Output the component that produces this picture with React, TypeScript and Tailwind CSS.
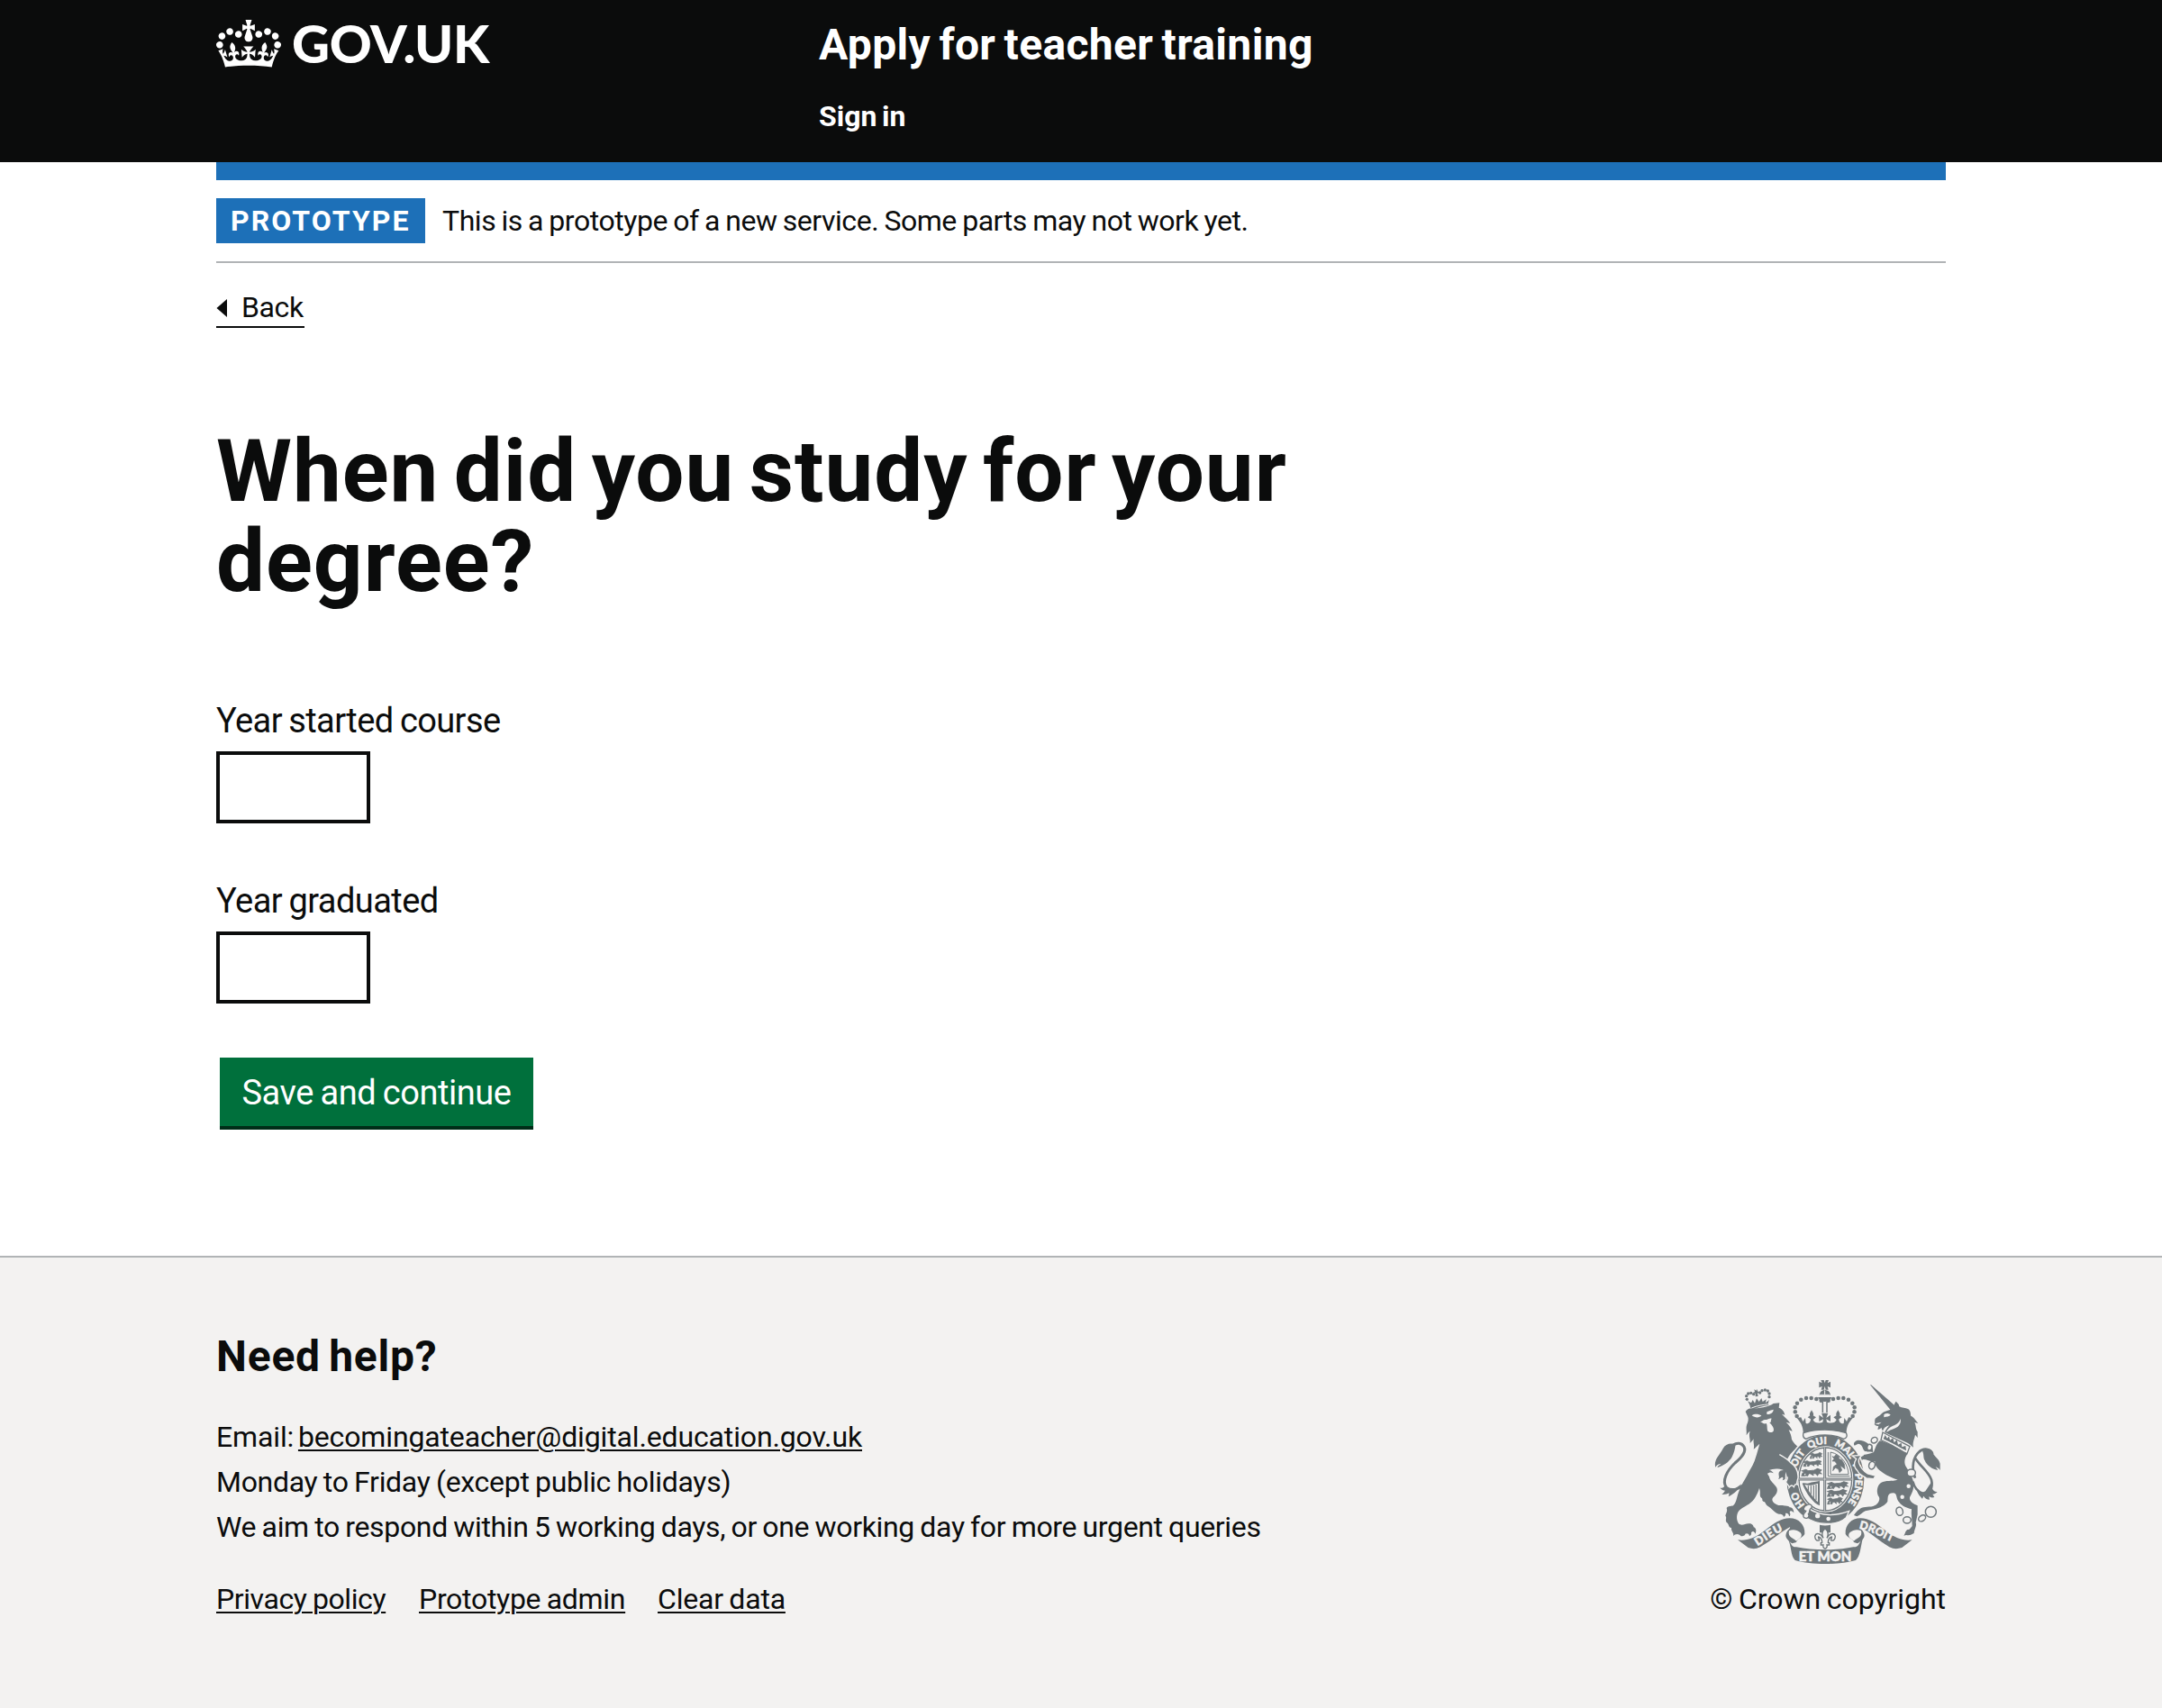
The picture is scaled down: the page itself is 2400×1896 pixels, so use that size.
import React from "react";

const CROWN_PATH =
  "M25 30.2c3.5 1.5 7.7-.2 9.1-3.7 1.5-3.6-.2-7.8-3.9-9.2-3.6-1.4-7.6.3-9.1 3.9-1.4 3.5.3 7.5 3.9 9zM9 39.5c3.6 1.5 7.8-.2 9.2-3.7 1.5-3.6-.2-7.8-3.9-9.1-3.6-1.5-7.6.2-9.1 3.8-1.4 3.5.3 7.5 3.8 9zM4.4 57.2c3.5 1.5 7.7-.2 9.1-3.8 1.5-3.6-.2-7.7-3.9-9.1-3.5-1.5-7.6.3-9.1 3.8-1.4 3.5.3 7.6 3.9 9.1zm38.3-21.4c3.5 1.5 7.7-.2 9.1-3.8 1.5-3.6-.2-7.7-3.9-9.1-3.6-1.5-7.6.3-9.1 3.8-1.3 3.6.4 7.7 3.9 9.1zm64.4-5.6c-3.6 1.5-7.8-.2-9.1-3.7-1.5-3.6.2-7.8 3.8-9.2 3.6-1.4 7.7.3 9.2 3.9 1.3 3.5-.4 7.5-3.9 9zm15.9 9.3c-3.6 1.5-7.7-.2-9.1-3.7-1.5-3.6.2-7.8 3.7-9.1 3.6-1.5 7.7.2 9.2 3.8 1.5 3.5-.3 7.5-3.8 9zm4.7 17.7c-3.6 1.5-7.8-.2-9.2-3.8-1.5-3.6.2-7.7 3.9-9.1 3.6-1.5 7.7.3 9.2 3.8 1.3 3.5-.4 7.6-3.9 9.1zM89.3 35.8c-3.6 1.5-7.8-.2-9.2-3.8-1.4-3.6.2-7.7 3.9-9.1 3.6-1.5 7.7.3 9.2 3.8 1.4 3.6-.3 7.7-3.9 9.1zM69.7 17.7l8.9 4.7V9.3l-8.9 2.8c-.2-.3-.5-.6-.9-.9L72.4 0H59.6l3.5 11.2c-.3.3-.6.5-.9.9l-8.8-2.8v13.1l8.8-4.7c.3.3.6.7.9.9l-5 15.4v.1c-.2.8-.4 1.6-.4 2.4 0 4.1 3.1 7.5 7 8.1h.2c.3 0 .7.1 1 .1.4 0 .7 0 1-.1h.2c4-.6 7.1-4.1 7.1-8.1 0-.8-.1-1.7-.4-2.4V34l-5.1-15.4c.4-.2.7-.6 1-.9zM66 92.8c16.9 0 32.8 1.1 47.1 3.2 4-16.9 8.9-26.7 14-33.5l-9.6-3.4c1 4.9 1.1 7.2 0 10.2-1.5-1.4-3-4.3-4.2-8.7L108.6 76c2.8-2 5-3.2 7.5-3.3-4.4 9.4-10 11.9-13.6 11.2-4.3-.8-6.3-4.6-5.6-7.9 1-4.7 5.7-5.9 8-.5 4.3-8.7-3-11.4-7.6-8.8 7.1-7.2 7.9-13.5 2.1-21.1-8 6.1-8.1 12.3-4.5 20.8-4.7-5.4-12.1-2.5-9.5 6.2 3.4-5.2 7.9-2 7.2 3.1-.6 4.3-6.4 7.8-13.5 7.2-10.3-.9-10.9-8-11.2-13.8 2.5-.5 7.1 1.8 11 7.3L80.2 60c-4.1 4.4-8 5.3-12.3 5.4 1.4-4.4 8-11.6 8-11.6H55.5s6.4 7.2 7.9 11.6c-4.2-.1-8-1-12.3-5.4l1.4 16.4c3.9-5.5 8.5-7.7 10.9-7.3-.3 5.8-.9 12.8-11.1 13.8-7.2.6-12.9-2.9-13.5-7.2-.7-5 3.8-8.3 7.1-3.1 2.7-8.7-4.6-11.6-9.4-6.2 3.7-8.5 3.6-14.7-4.6-20.8-5.8 7.6-5 13.9 2.2 21.1-4.7-2.6-11.9.1-7.7 8.8 2.3-5.5 7.1-4.2 8.1.5.7 3.3-1.3 7.1-5.7 7.9-3.5.7-9-1.8-13.5-11.2 2.5.1 4.7 1.3 7.5 3.3l-4.7-15.4c-1.2 4.4-2.7 7.2-4.3 8.7-1.1-3-.9-5.3 0-10.2l-9.5 3.4c5 6.9 9.9 16.7 14 33.5 14.8-2.1 30.8-3.2 47.7-3.2z";

const LEFT_PEARLS: [number, number][] = [
  [425, 134], [409, 129], [392, 126], [375, 126], [358, 131], [345, 143], [338, 157], [338.5, 172], [344, 186],
];

const LION_CROWN_PEARLS: [number, number][] = [
  [178, 130], [176, 119], [182, 111], [191, 109], [200, 113], [221, 108], [228, 101], [238, 99], [247, 102], [252, 111], [252, 122],
];

const BODY = "#6f777b";
const PAPER = "#f3f2f1";

function Lion() {
  return (
    <g>
      {/* tail */}
      <path
        d="M178 402C158 430 128 438 110 424C92 404 112 366 138 342C164 320 176 304 168 288C160 274 144 274 132 282"
        fill="none"
        stroke={BODY}
        strokeWidth="9"
      />
      <path d="M140 280C122 274 106 279 98 294C90 310 78 322 74 334C70 344 72 352 73 357C76 348 84 346 92 344C84 350 78 354 80 357C98 352 118 340 128 322C135 308 138 296 140 280Z" fill={BODY} />
      <path d="M106 416C98 426 94 426 88 425C94 431 99 433 105 434C100 441 98 444 94 447C106 448 112 445 118 442C118 446 118 450 116 454C134 446 152 430 160 412L140 426C126 432 112 426 106 416Z" fill={BODY} />
      {/* body and mane */}
      <path
        d="M173 171C178 164 184 160 190 161C220 160 248 156 266 144L286 142L284 158C296 162 302 172 304 182L294 179C304 190 316 200 322 210L308 206C318 216 326 226 329 236L317 232C323 244 326 254 327 264C334 276 340 284 352 290C334 296 320 312 312 330C330 346 346 362 350 382C352 398 340 402 346 412C340 408 336 410 334 418C328 412 324 414 318 420C318 412 312 412 310 406C310 400 318 396 312 388C308 396 302 398 296 400C300 394 298 388 294 390C290 392 286 396 282 396C288 388 282 384 284 374C286 368 292 366 300 366C278 358 262 362 252 366C260 368 264 372 266 376C258 372 250 374 246 378L252 388C254 400 262 406 274 420C284 432 276 446 268 454C258 462 262 472 272 478C282 486 290 482 300 484C310 486 316 484 320 490C328 488 334 498 334 508C328 500 322 500 320 506C324 512 322 518 318 520C318 512 312 508 306 510C308 516 304 520 300 522C300 514 292 512 284 512C268 508 260 492 248 486C238 480 242 472 232 470C226 466 232 462 226 458C218 454 224 442 220 430C216 420 220 412 222 402C222 424 214 444 202 462C190 480 168 486 152 500C142 512 142 530 150 544C162 554 172 542 186 544C196 544 200 552 200 556C208 558 210 568 206 578C202 568 196 568 192 574C194 580 190 584 186 586C186 578 178 574 172 578C172 584 164 586 158 586C150 576 138 578 132 586C136 574 124 570 126 558C114 556 120 546 110 540C104 532 112 524 106 518C108 508 114 504 110 492C116 484 124 488 132 484C144 472 144 452 152 434C160 414 170 398 178 384C188 362 200 348 206 326C212 308 216 292 220 278C210 286 206 292 200 296C204 284 198 276 200 262C196 268 192 272 188 276C190 262 182 252 188 236C182 240 180 244 176 250C178 234 172 224 180 208C184 196 182 188 178 182Z"
        fill={BODY}
      />
      {/* face */}
      <path d="M194 184C204 177 216 179 226 184C220 192 206 193 194 184ZM244 172C252 168 258 166 266 164C266 175 254 181 244 180Z" fill={PAPER} />
      <path d="M222 204C230 205 232 196 240 198C246 200 250 192 260 194C256 200 260 208 252 208C260 214 270 226 266 236C262 242 250 242 246 234C244 224 246 216 242 210C236 214 228 208 222 204Z" fill={PAPER} />
      {/* crown */}
      <path d="M189 157C188 149 184 142 180 136L192 142L197 132L204 143L210 127L218 138L226 126L230 138L242 130L240 142L252 132C249 138 248 144 250 150C230 152 210 158 193 166Z" fill={BODY} />
      <path d="M193 159C212 151 232 148 250 146" stroke={PAPER} strokeWidth="3" fill="none" />
      {LION_CROWN_PEARLS.map(([x, y]) => (
        <circle key={x + "-" + y} cx={x} cy={y} r="5" fill={BODY} />
      ))}
      <path d="M202 97L209 101L210 95L215 105L221 105L213 110L215 120L206 121L206 111L198 108L204 105Z" fill={BODY} />
    </g>
  );
}

function Unicorn() {
  return (
    <g>
      {/* horn, head and mane */}
      <path d="M588 82C592 80 595 84 598 88L672 152L656 166Z" fill={BODY} />
      <path
        d="M656 164L668 152C668 146 670 142 674 137C678 142 684 144 685 154C694 160 706 158 714 162C724 168 722 178 724 186C732 188 738 198 748 210L736 207C742 218 738 226 746 238L746 258L738 248C736 262 728 274 732 290C724 284 718 276 706 272L636 240C640 232 646 224 652 217C642 220 634 224 630 236L625 224C622 228 618 230 613 230L616 218C612 220 606 218 602 213C606 209 602 203 604 198C606 190 616 188 624 180C632 170 644 168 656 164Z"
        fill={BODY}
      />
      <path d="M634 181C640 176 650 176 656 182C652 188 642 187 634 190ZM689 194C692 210 684 220 672 226C660 232 650 234 642 240C646 228 654 222 664 218C676 214 686 206 689 194ZM604 211L626 206L616 214Z" fill={PAPER} />
      {/* coronet collar */}
      <path d="M630 240L720 287L711 311C688 300 652 276 624 266Z" fill={PAPER} stroke={BODY} strokeWidth="4" />
      <path d="M632 262L638 249L645 260L651 253L654 266L664 259L668 274L677 265L681 281L692 275L694 289L706 285L708 301C684 289 660 275 632 262Z" fill={BODY} />
      {/* tail */}
      <path
        d="M738 392C724 356 732 322 750 306C766 290 790 294 796 312M736 322C752 352 784 370 792 398C798 424 788 448 764 444C746 438 734 420 730 404"
        fill="none"
        stroke={BODY}
        strokeWidth="8"
      />
      <path d="M762 302C774 290 794 294 798 310C802 322 816 326 821 344L821 366C818 360 812 358 806 354L814 366C796 364 776 350 770 334C764 322 768 314 762 302Z" fill={BODY} />
      <path d="M744 434C748 448 756 454 762 461L766 452C770 460 778 464 786 464L784 454C790 458 796 458 802 456L796 446C804 446 808 442 812 438C796 440 790 420 792 406L772 436C762 442 752 440 744 434Z" fill={BODY} />
      {/* body and legs */}
      <path
        d="M620 268C650 274 682 296 712 312C704 324 700 338 706 352C720 374 728 388 732 404C736 424 728 442 720 456C718 470 732 478 746 484L746 514L740 540C744 552 736 560 734 576C726 580 722 584 708 582L700 584C706 576 704 570 712 564C720 566 722 558 728 552C728 532 724 512 726 496C710 492 692 484 686 474C672 460 680 444 666 442C644 442 648 456 646 470C640 482 620 492 602 496L572 502C560 508 556 516 544 520L534 516C540 508 544 502 550 498C562 486 580 490 598 486C612 482 622 468 618 456C606 440 612 416 624 408C640 398 660 404 680 398C664 392 644 384 630 374C614 364 602 350 604 336C592 340 580 330 564 330C556 336 554 344 556 354L554 318C570 314 588 312 600 306C606 292 608 280 620 268Z"
        fill={BODY}
      />
      <path d="M598 306C584 304 570 308 566 298C562 288 560 280 548 278L536 284C530 276 538 268 548 266C562 266 572 270 582 278L596 290Z" fill={BODY} />
      {/* chain */}
      <g fill={PAPER} stroke={BODY} strokeWidth="4.500">
        <ellipse cx="602" cy="266" rx="11" ry="9" transform="rotate(-35 602 266)" />
        <ellipse cx="586" cy="290" rx="8" ry="10" transform="rotate(15 586 290)" />
        <ellipse cx="594" cy="350" rx="10" ry="13" transform="rotate(15 594 350)" />
        <ellipse cx="725" cy="375" rx="14" ry="12" />
        <circle cx="716" cy="419" r="9" />
        <circle cx="695" cy="455" r="9" />
        <ellipse cx="686" cy="503" rx="11" ry="14" transform="rotate(-15 686 503)" />
        <ellipse cx="711" cy="532" rx="13" ry="11" />
        <ellipse cx="761" cy="526" rx="13" ry="9" transform="rotate(-35 761 526)" />
        <circle cx="790" cy="505" r="18" />
      </g>
    </g>
  );
}

function RoyalCrown() {
  return (
    <g>
      <path d="M424 66H450L446 76L456 71V91L446 87L449 98H425L428 87L418 91V71L428 76Z" fill={BODY} />
      <path d="M434 66L440 66L437 76ZM434 98L440 98L437 86Z" fill={PAPER} />
      <path d="M419 117C420 105 428 99 437 99C447 99 455 105 456 117Z" fill={BODY} />
      <path d="M420 115H455M437 100V114" stroke={PAPER} strokeWidth="3" />
      <path d="M414 123H460C456 133 446 138 437 138C428 138 418 133 414 123Z" fill={BODY} />
      <path d="M430 138V174M444 138V174" stroke={BODY} strokeWidth="4.500" />
      {LEFT_PEARLS.map(([x, y]) => (
        <g key={x} fill={BODY}>
          <circle cx={x} cy={y} r="6.8" />
          <circle cx={874 - x} cy={y} r="6.8" />
        </g>
      ))}
      <path
        d="M365 246C366 220 356 206 344 192L358 190L364 204L372 192L374 210C382 214 390 206 390 196L380 190L388 184C384 178 390 172 393 166C396 172 402 178 398 184L408 190L398 198C402 208 414 212 430 206L432 196L418 204V182L432 192L426 176H448L442 192L456 182V204L442 196L444 206C460 212 472 208 476 198L466 190L476 184C472 178 478 172 481 166C484 172 490 178 486 184L494 190L484 196C484 206 492 214 500 210L502 192L510 204L516 190L530 192C518 206 508 220 509 246C500 236 374 236 365 246Z"
        fill={BODY}
      />
      <path d="M366 242C362 256 368 260 374 262C410 244 466 244 500 262C508 260 514 254 508 242C468 228 406 228 366 242Z" fill={PAPER} stroke={BODY} strokeWidth="4" />
      <path d="M379 222C416 212 458 212 495 222" stroke={BODY} strokeWidth="8" fill="none" />
    </g>
  );
}

function Garter() {
  const lion = "M0 6L8 2L14 6L26 4L32 0L40 4L36 9L40 14L34 13L32 19L28 13L22 14L24 19L18 14L14 14L12 20L8 19L10 12L4 14L6 20L0 20L2 12L6 9Z";
  return (
    <g>
      <ellipse cx="439" cy="396" rx="134" ry="153" fill={PAPER} />
      <ellipse cx="439" cy="396" rx="129" ry="148" fill={BODY} />
      <ellipse cx="439" cy="396" rx="93" ry="110" fill={PAPER} />
      <ellipse cx="439" cy="396" rx="88" ry="105" fill="none" stroke={BODY} strokeWidth="4" />
      <path id="garter-motto" d="M372 483A100 117 0 0 1 339 396A100 117 0 0 1 439 279A100 117 0 0 1 539 396A100 117 0 0 1 506 483" fill="none" />
      <g fill={PAPER} stroke={PAPER} strokeWidth="1.5" fontFamily="Lato, sans-serif" fontWeight="900" fontSize="33">
        <text><textPath href="#garter-motto" startOffset="2">HO</textPath></text>
        <text><textPath href="#garter-motto" startOffset="116">SOIT</textPath></text>
        <text><textPath href="#garter-motto" startOffset="209">QUI</textPath></text>
        <text><textPath href="#garter-motto" startOffset="295">MAL</textPath></text>
        <text><textPath href="#garter-motto" startOffset="379">Y</textPath></text>
        <text><textPath href="#garter-motto" startOffset="417">PENSE</textPath></text>
      </g>
      {/* quartered arms */}
      <path d="M437 290V502M350 396H528" stroke={BODY} strokeWidth="9" />
      <path d="M437 290V502M350 396H528" stroke={PAPER} strokeWidth="2" />
      <g fill={BODY} stroke={BODY} strokeWidth="2">
        <path d={lion} transform="translate(388 307)" />
        <path d={lion} transform="translate(366 333) scale(1.5 1)" />
        <path d={lion} transform="translate(360 361) scale(1.65 1.2)" />
        <path d={lion} transform="translate(446 404) scale(1.7 1.15)" />
        <path d={lion} transform="translate(446 430) scale(1.6 1.15)" />
        <path d={lion} transform="translate(446 456) scale(1.25 1.15)" />
        <path d="M462 320L468 322L474 314L484 320L484 328L494 332L502 346L504 362L496 356L488 350L494 366L486 374L482 362L472 358L464 368L466 354L478 346L470 336L462 336L468 328Z" />
      </g>
      <path d="M448 306V386H520M456 306V380H516C516 350 492 312 456 306" stroke={BODY} strokeWidth="3" fill="none" />
      <path d="M362 410C370 406 376 414 388 408C400 404 416 406 420 400V484C400 476 376 446 362 410ZM370 414C386 440 400 460 414 472V410C400 416 382 418 370 414Z" fillRule="evenodd" fill={BODY} />
      <path d="M382 418V434M391 418V446M400 416V458M408 414V466" stroke={BODY} strokeWidth="3.500" />
      {/* strap and buckle */}
      <path d="M378 490C420 520 470 520 518 502L508 524C478 552 412 552 366 518Z" fill={BODY} stroke={PAPER} strokeWidth="4" />
      <circle cx="413" cy="518" r="8" fill={PAPER} />
      <circle cx="449" cy="528" r="7" fill={PAPER} />
      <path d="M378 482C388 476 398 484 392 492C382 496 390 506 382 512C388 520 380 530 368 524C360 516 370 510 374 502C362 500 366 486 378 482Z" fill={PAPER} stroke={BODY} strokeWidth="4" />
    </g>
  );
}

function Paws() {
  return (
    <g fill={BODY} stroke={PAPER} strokeWidth="4">
      {/* lion's forearm over the garter */}
      <path d="M286 314C304 324 314 330 322 340C340 352 348 368 348 386C350 398 340 402 346 414C340 410 338 414 334 422C328 414 324 416 318 424C318 414 310 414 308 406C308 400 316 396 312 388" />
      {/* unicorn's lower foreleg over the garter */}
      <path d="M566 316C556 318 552 326 550 332C548 344 556 354 562 362C568 370 574 374 580 378L606 384L600 395L576 393C562 382 550 382 546 368C532 356 534 340 542 328L528 318Z" />
    </g>
  );
}

function Scroll() {
  return (
    <g>
      <path d="M147 598C174 602 202 594 236 568C268 542 292 526 320 526C350 526 372 548 370 578C366 590 346 592 342 606L328 610C316 600 304 592 308 578C312 564 326 558 320 556C290 572 258 602 222 622C206 630 194 628 182 624Z" fill={BODY} />
      <path d="M318 568C330 562 344 564 356 574C366 586 352 596 342 602C334 592 312 590 318 568Z" fill={PAPER} />
      <path d="M728 598C700 602 674 594 640 568C608 542 584 526 556 526C526 526 504 548 506 578C510 590 530 592 534 606L546 610C560 600 572 592 568 578C564 564 550 558 556 556C586 572 618 602 652 622C668 630 680 628 694 624Z" fill={BODY} />
      <path d="M558 568C546 562 532 564 520 574C510 586 524 596 534 602C542 592 564 590 558 568Z" fill={PAPER} />
      <path d="M312 590C326 606 322 622 342 622C400 634 476 634 532 622C554 622 550 606 564 590C556 622 556 650 540 666C484 682 392 682 338 666C322 650 328 618 312 590Z" fill={BODY} />
      <path id="scroll-left" d="M213 618C246 600 280 568 330 557" fill="none" />
      <path id="scroll-right" d="M550 560C590 566 630 594 690 617" fill="none" />
      <g fill={PAPER} stroke={PAPER} strokeWidth="1.5" fontFamily="Lato, sans-serif" fontWeight="900">
        <text fontSize="38" letterSpacing="3"><textPath href="#scroll-left">DIEU</textPath></text>
        <text fontSize="37" letterSpacing="1"><textPath href="#scroll-right">DROIT</textPath></text>
        <text x="350" y="668" fontSize="46" textLength="176" lengthAdjust="spacingAndGlyphs">ET MON</text>
      </g>
      {/* fleur-de-lis */}
      <path d="M420 548C432 551 444 551 456 548V574H420Z" fill={BODY} />
      <path
        d="M438 560C428 568 426 580 432 592C424 576 408 572 404 586C404 596 410 602 418 600C420 594 414 592 416 588C424 590 428 600 428 608H424V615H432C430 622 434 627 438 627C442 627 446 622 444 615H452V608H448C448 600 452 590 460 588C462 592 456 594 458 600C466 602 472 596 472 586C468 572 452 576 444 592C450 580 448 568 438 560Z"
        fill={PAPER}
        stroke={BODY}
        strokeWidth="4"
      />
    </g>
  );
}

function RoyalArms() {
  return (
    <svg viewBox="60 60 780 630" className="block h-[210px] w-[260px]" aria-hidden="true">
      <Lion />
      <Unicorn />
      <Garter />
      <RoyalCrown />
      <Paws />
      <Scroll />
    </svg>
  );
}

function Header() {
  return (
    <header className="h-[180px] bg-[#0b0c0c] text-white">
      <div className="mx-[240px] flex">
        <a className="flex h-[95px] w-[669px] items-center">
          <svg viewBox="0 0 132 97" className="mt-px h-[53px] w-[72px] fill-current" aria-hidden="true">
            <path d={CROWN_PATH} />
          </svg>
          <span className="ml-[12px] font-[Lato,sans-serif] text-[58px] leading-none font-black tracking-[-0.3px]">GOV.UK</span>
        </a>
        <div>
          <div className="mt-[25px] text-[48px] leading-[50px] font-bold tracking-[0.35px] [word-spacing:-3px]">Apply for teacher training</div>
          <nav className="mt-[29px] text-[32px] leading-[50px] font-bold [word-spacing:-2.4px]">Sign in</nav>
        </div>
      </div>
    </header>
  );
}

function YearField({ label, tracking }: { label: string; tracking: string }) {
  return (
    <label className="mb-[60px] block w-fit">
      <span className={"block pt-px pb-[9px] text-[38px] leading-[50px] [word-spacing:-1.5px] " + tracking}>{label}</span>
      <input className="block h-[80px] w-[171px] border-4 border-[#0b0c0c] bg-white px-2 outline-none" />
    </label>
  );
}

const linkClass = "underline decoration-2 underline-offset-[3px]";

export default function App() {
  return (
    <div className="flex min-h-[1896px] flex-col bg-white font-[Roboto,sans-serif] text-[#0b0c0c]">
      <Header />
      <div className="mx-[240px]">
        <div className="h-5 bg-[#1d70b8]" />
        <div className="flex items-center border-b-2 border-[#b1b4b6] py-5 text-[32px] leading-[50px]">
          <strong className="w-[232px] bg-[#1d70b8] pl-4 tracking-[2.05px] text-white">PROTOTYPE</strong>
          <span className="ml-[19px] tracking-[-0.458px] [word-spacing:-1.2px]">This is a prototype of a new service. Some parts may not work yet.</span>
        </div>
        <a className="mt-6 flex h-[48px] w-[98px] items-center border-b-2 border-[#0b0c0c] text-[32px] leading-10">
          <svg viewBox="0 0 12 20" className="mt-[6px] h-5 w-3 fill-current" aria-hidden="true">
            <path d="M0.500 10L12 0V20Z" />
          </svg>
          <span className="ml-4 mt-[3px] tracking-[-0.4px]">Back</span>
        </a>
      </div>
      <main className="mx-[240px] mt-[109px] w-[1260px]">
        <h1 className="text-[96px] leading-[100px] font-bold tracking-[0.985px] [word-spacing:-8.4px]">
          When did you study for your
          <br />
          degree?
        </h1>
        <form className="mt-[101px]">
          <YearField label="Year started course" tracking="tracking-[-0.6px]" />
          <YearField label="Year graduated" tracking="tracking-[-0.56px]" />
          <button type="button" className="ml-1 block h-[76px] w-[348px] bg-[#00703c] pt-[2px] text-[38px] tracking-[-0.43px] text-white shadow-[0_4px_0_#002d18] [word-spacing:-1.5px]">
            Save and continue
          </button>
        </form>
      </main>
      <footer className="mt-[144px] grow border-t-2 border-[#b1b4b6] bg-[#f3f2f1]">
        <div className="mx-[240px] flex items-end justify-between pt-[85px] text-[32px] leading-[50px]">
          <div>
            <h2 className="mb-[39px] text-[48px] leading-[50px] font-bold tracking-[0.8px] [word-spacing:-3.5px]">Need help?</h2>
            <p className="tracking-[-0.14px] [word-spacing:-3px]">
              Email: <a className={linkClass}>becomingateacher@digital.education.gov.uk</a>
            </p>
            <p className="tracking-[-0.3px] [word-spacing:-1.2px]">Monday to Friday (except public holidays)</p>
            <p className="tracking-[-0.345px] [word-spacing:-1.2px]">We aim to respond within 5 working days, or one working day for more urgent queries</p>
            <nav className="mt-[30px] flex [word-spacing:-1.2px]">
              <a className={linkClass + " w-[225px] tracking-[-0.4px]"}>Privacy policy</a>
              <a className={linkClass + " w-[265px] tracking-[-0.3px]"}>Prototype admin</a>
              <a className={linkClass + " tracking-[-0.2px]"}>Clear data</a>
            </nav>
          </div>
          <div className="flex flex-col items-end">
            <RoyalArms />
            <span className="mt-[10px] tracking-[-0.05px] [word-spacing:-1.2px]">© Crown copyright</span>
          </div>
        </div>
      </footer>
    </div>
  );
}
